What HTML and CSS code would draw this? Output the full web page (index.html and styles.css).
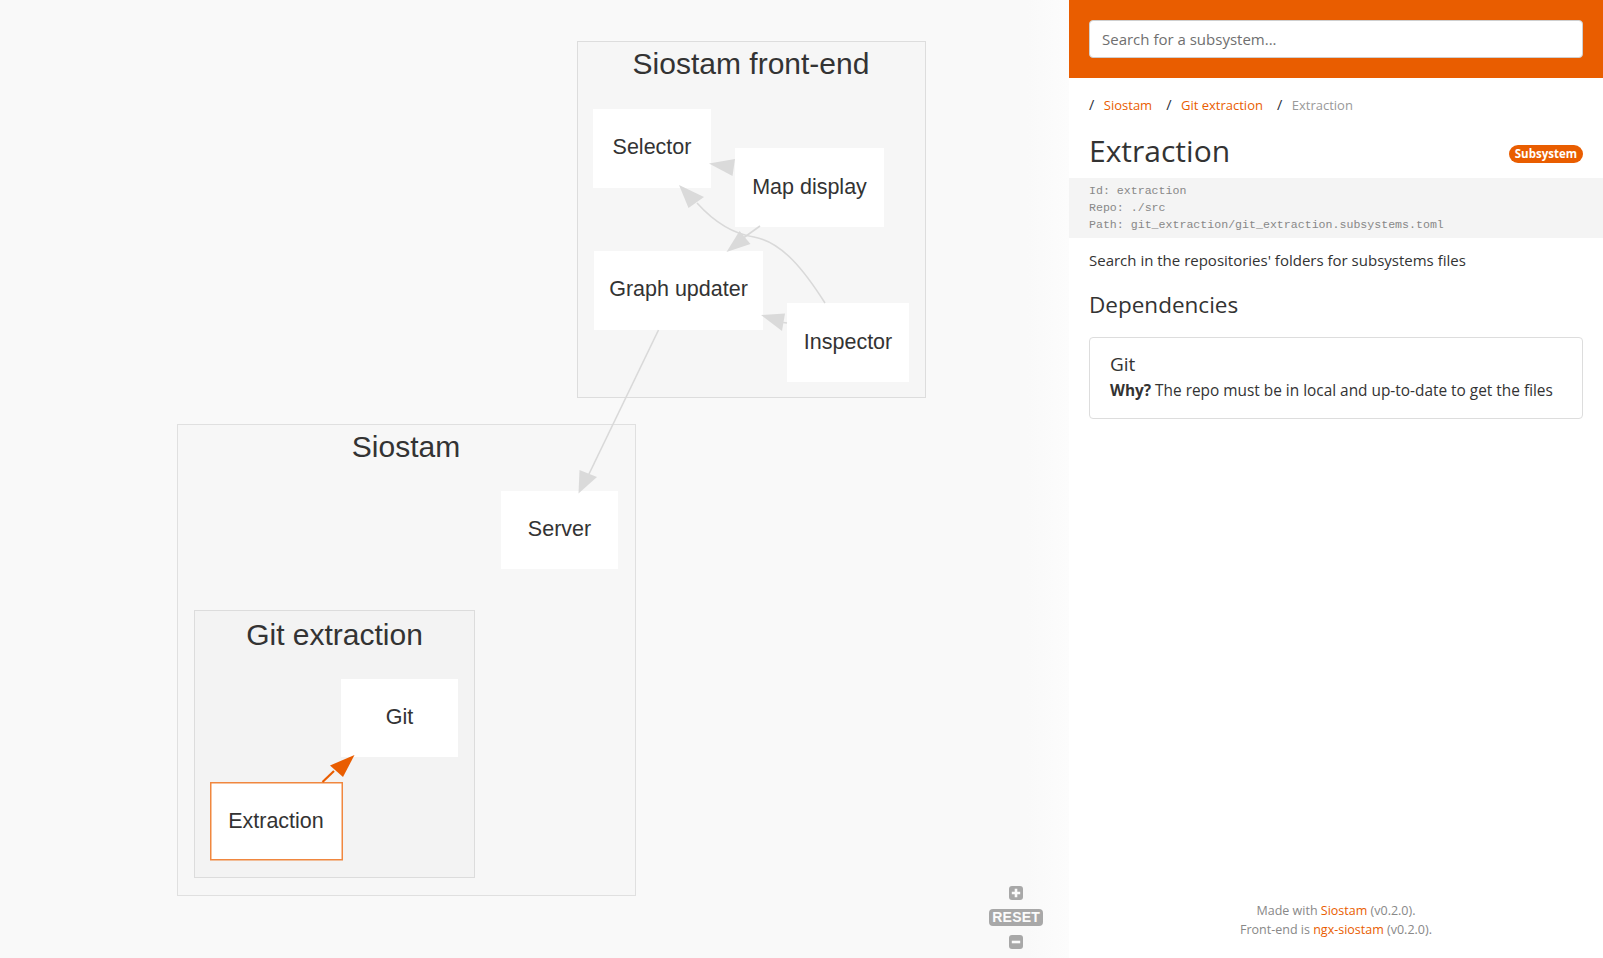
FILE: index.html
```html
<!DOCTYPE html>
<html lang="en">
<head>
<meta charset="utf-8">
<title>Siostam</title>
<link rel="stylesheet" href="styles.css">
</head>
<body>
<div class="app">
  <main class="map">
    <svg class="graph" width="1069" height="958" viewBox="0 0 1069 958">
      <g class="cluster">
        <rect class="cluster-box c1" x="577.5" y="41.5" width="348" height="356"/>
        <text class="cluster-title" x="751" y="74">Siostam front-end</text>
      </g>
      <g class="cluster">
        <rect class="cluster-box c2" x="177.5" y="424.5" width="458" height="471"/>
        <text class="cluster-title" x="406" y="457">Siostam</text>
      </g>
      <g class="cluster">
        <rect class="cluster-box c3" x="194.5" y="610.5" width="280" height="267"/>
        <text class="cluster-title" x="334.5" y="644.5">Git extraction</text>
      </g>

      <g class="node"><rect x="593" y="109" width="118" height="79"/><text x="652" y="154">Selector</text></g>
      <g class="node"><rect x="735" y="148" width="149" height="79"/><text x="809.5" y="193.5">Map display</text></g>
      <g class="node"><rect x="594" y="251" width="169" height="79"/><text x="678.5" y="296">Graph updater</text></g>
      <g class="node"><rect x="787" y="303" width="122" height="79"/><text x="848" y="348.5">Inspector</text></g>
      <g class="node"><rect x="501" y="491" width="117" height="78"/><text x="559.5" y="536">Server</text></g>
      <g class="node"><rect x="341" y="679" width="117" height="78"/><text x="399.5" y="723.5">Git</text></g>
      <g class="node selected"><rect x="210.75" y="782.75" width="131.5" height="77"/><text x="276" y="828">Extraction</text></g>

      <g class="edge">
        <polygon points="709,163.5 735,159 732.5,176"/>
      </g>
      <g class="edge">
        <path d="M760 226 L744 237.5"/>
        <polygon points="726.5,252 739.5,231 750.5,244"/>
      </g>
      <g class="edge">
        <path d="M825 303 C804 270 782 242 754 237 C734 234 716 224 697 203"/>
        <polygon points="679,185 688.5,208 704,197"/>
      </g>
      <g class="edge">
        <path d="M787 323 L783 322.5"/>
        <polygon points="761,315 785,313.5 782,331"/>
      </g>
      <g class="edge">
        <path d="M658.5 330 L589 474"/>
        <polygon points="578.5,493.5 579.5,470 597,477"/>
      </g>
      <g class="edge active">
        <path d="M322.5 782 L334 771"/>
        <polygon points="354.5,755 330,765.5 343,777"/>
      </g>
    </svg>

    <div class="zoom-controls">
      <svg class="zoom-btn" width="14" height="14" viewBox="0 0 14 14"><rect x="0" y="0" width="14" height="14" rx="3"/><path class="glyph" d="M5.7 2.8h2.6v2.9h2.9v2.6h-2.9v2.9h-2.6v-2.9h-2.9v-2.6h2.9z"/></svg>
      <span class="zoom-reset">RESET</span>
      <svg class="zoom-btn minus" width="14" height="14" viewBox="0 0 14 14"><rect x="0" y="0" width="14" height="14" rx="3"/><path class="glyph" d="M2.8 5.7h8.4v2.6h-8.4z"/></svg>
    </div>
  </main>

  <aside class="panel">
    <header class="search-bar">
      <input class="search-input" type="text" placeholder="Search for a subsystem...">
    </header>

    <nav class="breadcrumb">
      <span class="crumb"><a href="#">Siostam</a></span>
      <span class="crumb"><a href="#">Git extraction</a></span>
      <span class="crumb current">Extraction</span>
    </nav>

    <div class="title-row">
      <h1 class="title">Extraction</h1>
      <span class="badge">Subsystem</span>
    </div>

    <div class="meta">
      <div>Id: extraction</div>
      <div>Repo: ./src</div>
      <div>Path: git_extraction/git_extraction.subsystems.toml</div>
    </div>

    <p class="description">Search in the repositories' folders for subsystems files</p>

    <h2 class="section-title">Dependencies</h2>

    <div class="dep-card">
      <div class="dep-name">Git</div>
      <div class="dep-why"><strong>Why?</strong> The repo must be in local and up-to-date to get the files</div>
    </div>

    <footer class="footer">
      <div>Made with <a href="#">Siostam</a> (v0.2.0).</div>
      <div>Front-end is <a href="#">ngx-siostam</a> (v0.2.0).</div>
    </footer>
  </aside>
</div>
</body>
</html>
```

FILE: styles.css
```css
* { box-sizing: border-box; }

html, body {
  margin: 0;
  height: 100%;
}

body {
  font-family: "Open Sans", "Noto Sans", sans-serif;
  color: #333;
  overflow: hidden;
}

.app {
  display: flex;
  height: 100vh;
}

/* ---------- map ---------- */
.map {
  flex: 1;
  position: relative;
  overflow: hidden;
  background: linear-gradient(to right, #f9f9f9 calc(100% - 42px), #fcfcfc 100%);
}

.graph {
  display: block;
}

.cluster-box {
  stroke-width: 1;
}
.cluster-box.c1 { fill: #f6f6f6; stroke: #dddddd; }
.cluster-box.c2 { fill: #f7f7f7; stroke: #e0e0e0; }
.cluster-box.c3 { fill: #f3f3f3; stroke: #dcdcdc; }

.cluster-title {
  font-family: "Liberation Sans", Arial, sans-serif;
  font-size: 30px;
  fill: #333;
  text-anchor: middle;
}

.node rect {
  fill: #fff;
}
.node.selected rect {
  stroke: #f0873f;
  stroke-width: 1.5;
}
.node text {
  font-family: "Liberation Sans", Arial, sans-serif;
  font-size: 21.5px;
  fill: #333;
  text-anchor: middle;
}

.edge path {
  fill: none;
  stroke: #d9d9d9;
  stroke-width: 1.6;
}
.edge polygon {
  fill: #dadada;
  stroke: none;
}
.edge.active path {
  stroke: #e95d00;
  stroke-width: 2.2;
}
.edge.active polygon {
  fill: #e95d00;
}

.zoom-controls {
  position: absolute;
  right: 26px;
  bottom: 9.5px;
  display: flex;
  flex-direction: column;
  align-items: center;
}

.zoom-btn {
  display: block;
  margin-right: 1px;
}
.zoom-btn rect { fill: #a8a8a8; }
.zoom-btn .glyph { fill: #fbfbfb; }

.zoom-reset {
  display: block;
  margin: 9px 0;
  padding: 0 3px;
  height: 17px;
  line-height: 17px;
  border-radius: 4px;
  background: #a8a8a8;
  color: #fbfbfb;
  font-family: "Liberation Sans", Arial, sans-serif;
  font-weight: 700;
  font-size: 14px;
  letter-spacing: 0.2px;
}

/* ---------- panel ---------- */
.panel {
  width: 534px;
  flex: none;
  display: flex;
  flex-direction: column;
  background: #fff;
}

.search-bar {
  background: #e95d00;
  padding: 20px;
}

.search-input {
  display: block;
  width: 100%;
  height: 38px;
  border: 1px solid #cfcfcf;
  border-radius: 4px;
  padding: 0 12px;
  font-family: "Open Sans", sans-serif;
  font-size: 15px;
  color: #333;
  outline: none;
}
.search-input::placeholder {
  color: #6f6f6f;
}

.breadcrumb {
  display: flex;
  margin: 17px 20px 0;
  font-size: 13px;
  line-height: 20px;
  height: 20px;
}
.crumb::before {
  content: "/";
  color: #2b2f3a;
  font-size: 14.5px;
  line-height: 0;
  margin-right: 9.5px;
}
.crumb + .crumb {
  margin-left: 14px;
}
.crumb a {
  color: #e95d00;
  text-decoration: none;
}
.crumb.current {
  color: #999;
}

.title-row {
  display: flex;
  justify-content: space-between;
  align-items: center;
  margin: 17px 20px 0;
}

.title {
  margin: 0;
  font-size: 30px;
  font-weight: 400;
  line-height: 37px;
}

.badge {
  margin-top: 7px;
  padding: 0 6px;
  height: 18px;
  line-height: 18px;
  border-radius: 9px;
  background: #e95d00;
  color: #fff;
  font-size: 11.5px;
  font-weight: 700;
}

.meta {
  margin-top: 9px;
  padding: 5px 20px;
  background: #f4f4f4;
  font-family: "Liberation Mono", "Courier New", monospace;
  font-size: 11.6px;
  line-height: 16.8px;
  color: #888;
}

.description {
  margin: 12px 20px 0;
  font-size: 15px;
  line-height: 20px;
}

.section-title {
  margin: 20.5px 20px 0;
  font-size: 22.5px;
  font-weight: 400;
  line-height: 27.6px;
}

.dep-card {
  margin: 19px 20px 0;
  border: 1px solid #dddddd;
  border-radius: 4px;
  padding: 14.5px 20px 17px;
}

.dep-name {
  font-size: 19px;
  line-height: 23px;
  margin-bottom: 5px;
}

.dep-why {
  font-size: 15.4px;
  line-height: 20px;
}

.footer {
  margin-top: auto;
  padding-bottom: 19.5px;
  text-align: center;
  font-size: 12.5px;
  line-height: 19px;
  color: #888;
}
.footer a {
  color: #e95d00;
  text-decoration: none;
}
```
